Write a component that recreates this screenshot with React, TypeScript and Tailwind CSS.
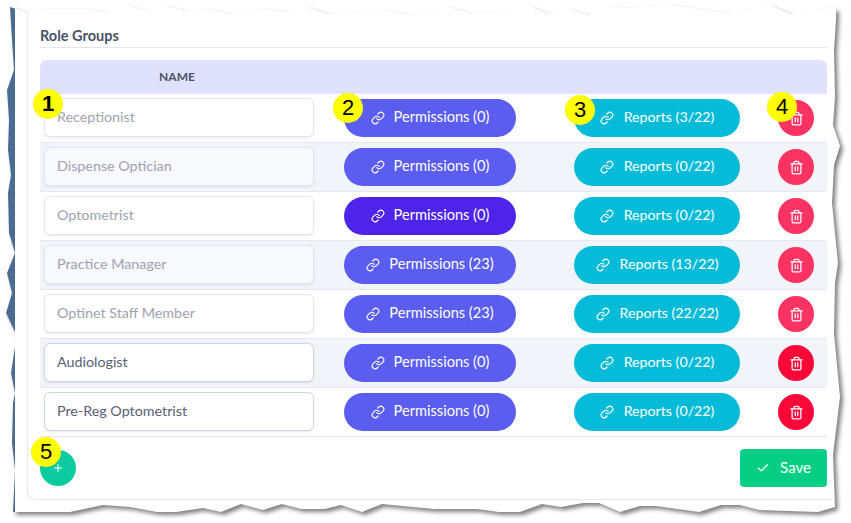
import { Check, Link, Plus, Trash2 } from 'lucide-react'

const paperEdge =
  '10,7 27,13 44,9 87,9 107,13 127,6 146,10 167,6 186,11 207,9 230,14 268,9 287,12 306,7 328,14 388,11 410,15 448,7 470,13 508,12 529,6 549,14 568,9 589,15 611,6 629,8 672,5 730,14 770,5 792,15 814,9 836,8 836,20 834,50 835,97 833,125 840,146 834,165 832,203 838,263 835,283 834,333 840,397 833,455 835,507 818,512 759,510 740,505 721,505 699,512 656,506 640,506 620,512 599,503 583,503 561,507 542,504 520,512 499,512 477,509 434,509 382,504 362,512 341,505 325,509 301,509 282,504 263,510 241,504 221,512 203,508 176,512 157,512 130,507 103,505 70,512 13,512 15,470 12,443 13,403 15,393 11,373 15,347 15,332 6,313 12,293 7,273 15,253 9,233 8,193 11,175 8,150 9,120 7,90 14,70 12,40'

const roles = [
  { name: 'Receptionist', perms: 0, reports: 3, filled: false },
  { name: 'Dispense Optician', perms: 0, reports: 0, filled: false },
  { name: 'Optometrist', perms: 0, reports: 0, filled: false, active: true },
  { name: 'Practice Manager', perms: 23, reports: 13, filled: false },
  { name: 'Optinet Staff Member', perms: 23, reports: 22, filled: false },
  { name: 'Audiologist', perms: 0, reports: 0, filled: true },
  { name: 'Pre-Reg Optometrist', perms: 0, reports: 0, filled: true },
]

function Callout({ n, className }: { n: number; className: string }) {
  return (
    <div
      className={`absolute w-[30px] h-[30px] rounded-full bg-[#ffff00] flex items-center justify-center text-[22px] leading-none text-black font-['Liberation_Sans',sans-serif] ${className}`}
    >
      {n}
    </div>
  )
}

function PaperEdge() {
  return (
    <svg
      className="absolute inset-0 drop-shadow-[3px_3px_2px_rgba(0,0,0,0.5)]"
      width={851}
      height={523}
      viewBox="0 0 851 523"
    >
      <defs>
        <clipPath id="paper">
          <polygon points={paperEdge} />
        </clipPath>
      </defs>
      <polygon points={paperEdge} fill="#ffffff" />
      <rect x="0" y="0" width="15" height="523" fill="#4a6c93" clipPath="url(#paper)" />
    </svg>
  )
}

export default function App() {
  return (
    <div className="relative w-[851px] h-[523px] overflow-hidden bg-white font-['Lato',sans-serif]">
      <PaperEdge />

      <div className="relative ml-[27px] mt-[13px] w-[808px] h-[487px] pt-[12px] pl-[12px] pr-[8px] border-l border-b border-[#e3e6ec] rounded-bl-[8px]">
        <div className="h-[23px] border-b border-[#e3e6ec] text-[14.5px] leading-[21px] font-bold text-[#475569]">
          Role Groups
        </div>

        <div className="mt-[12px] h-[34px] rounded-t-[7px] bg-[#e0e1fc] flex items-center">
          <div className="w-[274px] text-center text-[12px] font-bold text-[#4b5168]">NAME</div>
        </div>

        {roles.map((role, i) => (
          <div
            key={role.name}
            className={`h-[49px] flex items-center border-b border-[#e4e8f0] ${i % 2 === 1 ? 'bg-[#f1f4f9]' : ''}`}
          >
            <div
              className={`ml-[4px] mb-[1px] w-[270px] h-[39px] flex items-center pl-[12px] pb-[1px] rounded-[6px] border text-[14.3px] shadow-[0_1px_2px_rgba(100,116,139,0.15)] ${
                role.filled ? 'border-[#ccd5e3] bg-white text-[#566176]' : 'border-[#e2e6ee] text-[#9ca3af]'
              } ${!role.filled && i % 2 === 1 ? 'bg-[#f8f9fc]' : ''} ${!role.filled && i % 2 === 0 ? 'bg-white' : ''}`}
            >
              {role.name}
            </div>

            <div
              className={`ml-[30px] w-[172px] h-[38px] rounded-full flex items-center justify-center gap-[9px] text-white text-[14.6px] ${
                role.active ? 'bg-[#4f24ea]' : 'bg-[#5a5df0]'
              }`}
            >
              <Link size={14} />
              <span className="pb-[2px]">Permissions ({role.perms})</span>
            </div>

            <div className="ml-[58px] w-[166px] h-[38px] rounded-full bg-[#05bbd8] flex items-center justify-center gap-[10px] text-white text-[14.2px]">
              <Link size={14} />
              <span className="pb-[2px]">Reports ({role.reports}/22)</span>
            </div>

            <div
              className={`ml-[38px] w-[36px] h-[36px] rounded-full flex items-center justify-center text-white ${
                role.filled ? 'bg-[#fb0738]' : 'bg-[#fb3362]'
              }`}
            >
              <Trash2 size={15} />
            </div>
          </div>
        ))}

        <div className="mt-[12px] h-[38px] flex items-center justify-between">
          <div className="w-[36px] h-[36px] rounded-full bg-[#0ccba0] flex items-center justify-center text-white">
            <Plus size={12} />
          </div>
          <div className="w-[87px] h-[38px] rounded-[4px] bg-[#06cf85] flex items-center justify-center gap-[10px] text-white text-[15px]">
            <Check size={14} />
            <span className="pb-[2px]">Save</span>
          </div>
        </div>
      </div>

      <Callout n={1} className="left-[33px] top-[89px] font-bold" />
      <Callout n={2} className="left-[333px] top-[93px]" />
      <Callout n={3} className="left-[565px] top-[95px]" />
      <Callout n={4} className="left-[767px] top-[92px]" />
      <Callout n={5} className="left-[31px] top-[437px]" />
    </div>
  )
}
